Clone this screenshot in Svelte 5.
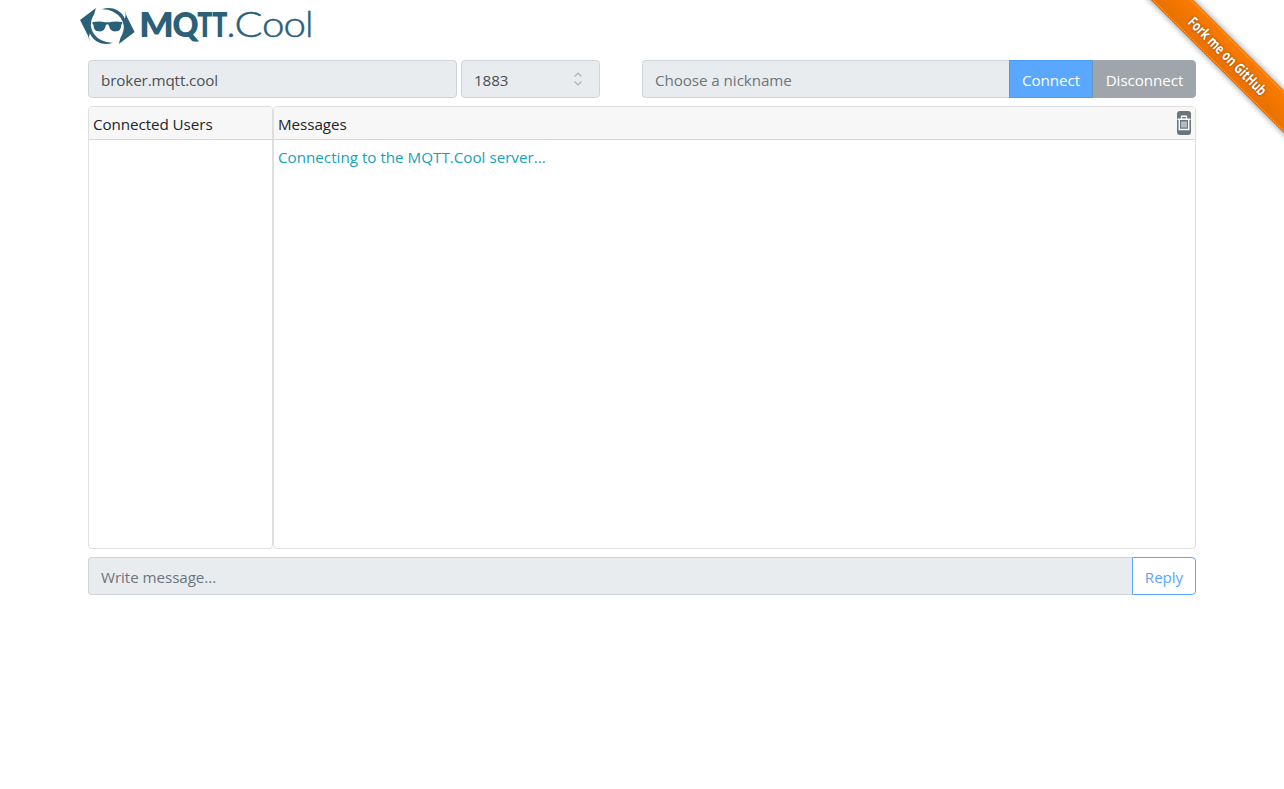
<script>
  let host = $state('broker.mqtt.cool');
  let port = $state('1883');
  let users = $state([]);
  let messages = $state(['Connecting to the MQTT.Cool server...']);

  const letters = [
    { c: 'M', x: 67.2, w: 34.5, bold: true },
    { c: 'Q', x: 100.5, w: 26, bold: true },
    { c: 'T', x: 125.2, w: 15.2, bold: true },
    { c: 'T', x: 140.2, w: 15.2, bold: true },
    { c: '.', x: 154.5, w: 9, bold: false },
    { c: 'C', x: 162.6, w: 28, bold: false },
    { c: 'o', x: 190, w: 22.5, bold: false },
    { c: 'o', x: 211.4, w: 22.5, bold: false },
    { c: 'l', x: 233.2, w: 8, bold: false },
  ];
</script>

<div class="page">
  <header>
    <svg class="logo" width="240" height="52" viewBox="0 0 240 52" role="img" aria-label="MQTT.Cool">
      <g transform="translate(4 4) scale(.337 .33333)" fill="#2a6078">
        <path d="M12 48L59 12L54 31Q44 46 44 65Q47 94 76 109Q91 117 110 116Q85 126 63 113Q48 104 41 88Q37 98 40 111L36 96Z" />
        <path d="M174 84L127 120L132 101Q142 86 142 67Q139 38 110 23Q95 15 76 16Q101 6 123 19Q138 28 145 44Q149 34 146 21L150 36Z" />
        <path d="M49 54Q63 51 79 53Q93 57 107 53Q123 51 137 54V60L134 62Q134 81 119 82Q101 84 98 65Q93 57 88 65Q85 84 67 82Q52 81 52 62L49 60Z" />
      </g>
      {#each letters as l}
        <text class:bold={l.bold} class:thin={!l.bold} x={l.x} y="37" textLength={l.w} lengthAdjust="spacingAndGlyphs">{l.c}</text>
      {/each}
    </svg>
  </header>

  <main>
    <div class="row connection">
      <div class="field host"><span>{host}</span></div>
      <div class="field port">
        <span>{port}</span>
        <svg width="10" height="14" viewBox="0 0 10 14" fill="none" stroke="#b5b7b9" stroke-width="1.4">
          <path d="M1.500 4.500L5 1.300L8.500 4.500M1.500 9.500L5 12.700L8.500 9.500" />
        </svg>
      </div>
      <div class="field nick"><span>Choose a nickname</span></div>
      <button class="connect"><span>Connect</span></button>
      <button class="disconnect"><span>Disconnect</span></button>
    </div>

    <div class="row panels">
      <section class="users">
        <h2><span>Connected Users</span></h2>
        {#each users as user}<p>{user}</p>{/each}
      </section>
      <section class="messages">
        <h2>
          <span>Messages</span>
          <button class="trash" aria-label="Clear messages">
            <svg width="14" height="16" viewBox="0 0 14 16" fill="none" stroke="#fff">
              <path d="M.5 4.200H13.500M2.300 4.500V14.500H11.700V4.500M4.500 4V1.300H9.500V4" stroke-width="1.400" />
              <path d="M5 6.500V12.500M7 6.500V12.500M9 6.500V12.500" />
            </svg>
          </button>
        </h2>
        {#each messages as message}<p><span>{message}</span></p>{/each}
      </section>
    </div>

    <div class="row">
      <div class="field write"><span>Write message...</span></div>
      <button class="reply"><span>Reply</span></button>
    </div>
  </main>

  <svg class="ribbon" width="149" height="149" viewBox="0 0 149 149" role="img" aria-label="Fork me on GitHub">
    <defs>
      <linearGradient id="orange" x1="0" y1="0" x2="0" y2="1">
        <stop offset="0" stop-color="#fb7b00" />
        <stop offset="1" stop-color="#e87100" />
      </linearGradient>
      <filter id="soft" x="-10%" y="-50%" width="120%" height="200%"><feGaussianBlur stdDeviation="3" /></filter>
    </defs>
    <g transform="translate(92.700 55.800) rotate(45)">
      <rect x="-130" y="-15.200" width="260" height="30.200" fill="#000" opacity=".45" filter="url(#soft)" />
      <rect x="-130" y="-15.200" width="260" height="30.200" fill="url(#orange)" />
      <path d="M-130 -13.300H130M-130 13.300H130" stroke="#ffb66b" stroke-width=".8" stroke-dasharray="2 1" />
      <text class="fork" x="-52" y="5.500" textLength="104" lengthAdjust="spacingAndGlyphs" fill="#fff">Fork me on GitHub</text>
    </g>
  </svg>
</div>

<style>
  :global(body) { margin: 0; background: #fff; overflow: hidden; }
  .page {
    position: relative;
    height: 789px;
    overflow: hidden;
    font: 15.200px/24px 'Open Sans', 'Noto Sans', sans-serif;
    letter-spacing: -.07px;
    color: #212529;
  }
  * { box-sizing: border-box; }
  header { height: 60px; padding-left: 72px; }
  .logo { display: block; overflow: visible; }
  .logo text { fill: #2a6078; font-family: Lato, sans-serif; font-size: 34px; letter-spacing: 0; }
  .logo .bold { font-weight: 800; }
  .logo .thin { font-weight: 300; font-size: 35.500px; stroke: #2a6078; stroke-width: .5px; }
  main { width: 1108px; margin-left: 88px; display: flex; flex-direction: column; gap: 8px; }
  .row { display: flex; }
  .field {
    height: 38px;
    padding: 7px 12px 5px;
    display: flex;
    align-items: center;
    background: #e9ecef;
    border: 1px solid #ced4da;
    border-radius: 4px;
    color: #495057;
    white-space: nowrap;
  }
  .host { width: 369px; margin-right: 4px; letter-spacing: -.12px; }
  .port { width: 139px; margin-right: 42px; justify-content: space-between; padding-right: 16px; }
  .port svg { margin-top: -2px; }
  .nick, .write { color: #6c757d; border-radius: 4px 0 0 4px; border-right: 0; }
  .nick { width: 367px; }
  .write { flex: 1; }
  button { font: inherit; letter-spacing: inherit; margin: 0; height: 38px; padding: 2px 0 0; white-space: nowrap; }
  .connect { width: 84px; color: #fff; background: #59a7ff; border: 1px solid #4b9af4; border-right-color: #6a93bf; }
  .disconnect { width: 103px; color: #fff; background: #9fa5ab; border: 1px solid #9fa5ab; border-radius: 0 4px 4px 0; }
  .reply { width: 64px; color: #59a7ff; background: #fff; border: 1px solid #59a7ff; border-radius: 0 4px 4px 0; }
  .panels { height: 443px; }
  section { border: 1px solid #dfdfdf; border-radius: 4px; overflow: hidden; }
  .users { width: 185px; }
  .messages { flex: 1; }
  h2 {
    margin: 0;
    height: 33px;
    padding: 2px 4px 0;
    display: flex;
    align-items: center;
    justify-content: space-between;
    font: inherit;
    background: #f7f7f7;
    border-bottom: 1px solid #d8d8d8;
  }
  p { margin: 0; padding: 5px 4px; color: #17a2b8; letter-spacing: 0; }
  .trash {
    width: 14px;
    height: 24px;
    padding: 0;
    margin-top: -2px;
    display: flex;
    align-items: center;
    justify-content: center;
    background: #6c757d;
    border: 0;
    border-radius: 3px;
  }
  .ribbon { position: absolute; top: 0; right: 0; pointer-events: none; }
  .fork { font: 700 14.500px 'Open Sans', sans-serif; letter-spacing: 0; text-shadow: 0 0 3px rgba(0, 0, 0, .5); }
</style>
